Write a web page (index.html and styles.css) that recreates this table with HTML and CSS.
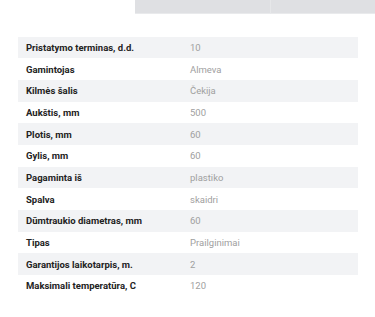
FILE: index.html
```html
<!DOCTYPE html>
<html lang="lt">
<head>
<meta charset="utf-8">
<link rel="stylesheet" href="styles.css">
</head>
<body>
<div class="tabs">
  <div class="tab tab-first"></div>
  <div class="tab"></div>
</div>
<table class="specs">
  <tbody>
    <tr><th>Pristatymo terminas, d.d.</th><td>10</td></tr>
    <tr><th>Gamintojas</th><td>Almeva</td></tr>
    <tr><th>Kilmės šalis</th><td>Čekija</td></tr>
    <tr><th>Aukštis, mm</th><td>500</td></tr>
    <tr><th>Plotis, mm</th><td>60</td></tr>
    <tr><th>Gylis, mm</th><td>60</td></tr>
    <tr><th>Pagaminta iš</th><td>plastiko</td></tr>
    <tr><th>Spalva</th><td>skaidri</td></tr>
    <tr><th>Dūmtraukio diametras, mm</th><td>60</td></tr>
    <tr><th>Tipas</th><td>Prailginimai</td></tr>
    <tr><th>Garantijos laikotarpis, m.</th><td>2</td></tr>
    <tr><th>Maksimali temperatūra, C</th><td>120</td></tr>
  </tbody>
</table>
</body>
</html>
```
FILE: styles.css
```css
html, body {
  margin: 0;
  padding: 0;
  background: #ffffff;
}
body {
  font-family: Roboto, "Liberation Sans", Arial, sans-serif;
  width: 375px;
  height: 317px;
  overflow: hidden;
}
.tabs {
  display: flex;
  margin-left: 135px;
  height: 14px;
}
.tab {
  flex: 1;
  background: #dfe0e3;
  border-bottom: 1px solid #e9eaec;
}
.tab-first {
  flex: 0 0 135px;
  border-right: 1px solid #e6e7e9;
}
.specs {
  margin: 22.7px 0 0 18px;
  width: 340px;
  border-collapse: collapse;
  font-size: 9.5px;
}
.specs tr {
  height: 21.67px;
}
.specs tr:nth-child(odd) {
  background: #f2f3f5;
}
.specs th {
  text-align: left;
  font-weight: 700;
  color: #222222;
  padding: 0 0 0 8px;
  width: 164px;
}
.specs td {
  color: #a0a0a0;
  padding: 0;
}
```
